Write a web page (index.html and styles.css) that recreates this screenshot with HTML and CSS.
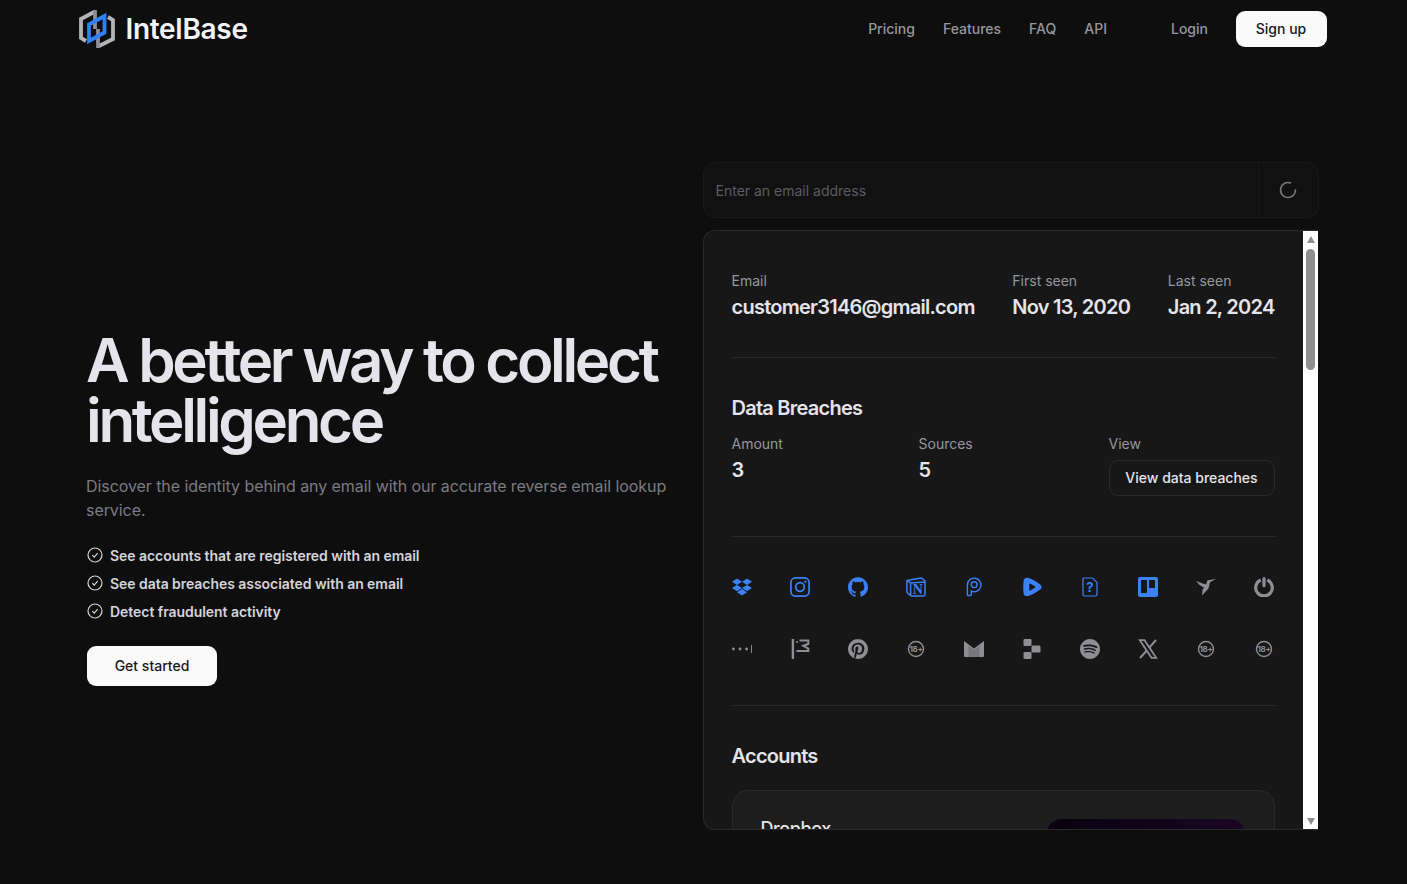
FILE: index.html
```html
<!DOCTYPE html>
<html lang="en">
<head>
  <meta charset="UTF-8">
  <meta name="viewport" content="width=device-width, initial-scale=1.0">
  <title>IntelBase</title>
  <link rel="stylesheet" href="styles.css">
</head>
<body>

  <header class="navbar">
    <a class="brand" href="#">
      <svg class="brand-mark" viewBox="0 0 36 40" fill="none" stroke-width="3.800">
        <path d="M16 2.500 2 10v19l5 3" stroke="#b4b4b8"/>
        <path d="M16 1v19" stroke="#8d8d91"/>
        <path d="M19 37.500 34 30V11l-5-3" stroke="#b4b4b8"/>
        <path d="M19 39V20" stroke="#8d8d91"/>
        <path d="M10 15.500 25.500 7v16.500L10 32z" stroke="#2f80f7"/>
      </svg>
      <span>IntelBase</span>
    </a>
    <nav class="nav-links">
      <a href="#">Pricing</a>
      <a href="#">Features</a>
      <a href="#">FAQ</a>
      <a href="#">API</a>
    </nav>
    <a class="nav-login" href="#">Login</a>
    <a class="btn btn-signup" href="#">Sign up</a>
  </header>

  <main class="hero">
    <section class="hero-left">
      <h1>A better way to collect intelligence</h1>
      <p class="lead">Discover the identity behind any email with our accurate reverse email lookup service.</p>
      <ul class="features">
        <li>
          <svg viewBox="0 0 16 16" fill="none" stroke="currentColor" stroke-width="1.200"><circle cx="8" cy="8" r="7"/><path d="m5.300 8.200 1.900 1.900 3.500-3.900"/></svg>
          See accounts that are registered with an email
        </li>
        <li>
          <svg viewBox="0 0 16 16" fill="none" stroke="currentColor" stroke-width="1.200"><circle cx="8" cy="8" r="7"/><path d="m5.300 8.200 1.900 1.900 3.500-3.900"/></svg>
          See data breaches associated with an email
        </li>
        <li>
          <svg viewBox="0 0 16 16" fill="none" stroke="currentColor" stroke-width="1.200"><circle cx="8" cy="8" r="7"/><path d="m5.300 8.200 1.900 1.900 3.500-3.900"/></svg>
          Detect fraudulent activity
        </li>
      </ul>
      <a class="btn btn-start" href="#">Get started</a>
    </section>

    <section class="hero-right">
      <div class="search">
        <input type="text" placeholder="Enter an email address">
        <div class="search-action">
          <svg viewBox="0 0 24 24" fill="none" stroke="#77777c" stroke-width="2" stroke-linecap="round"><path d="M21 12a9 9 0 1 1-6.219-8.560"/></svg>
        </div>
      </div>

      <div class="panel">
        <div class="panel-body">
          <div class="summary">
            <div class="field">
              <span class="label">Email</span>
              <strong class="value">customer3146@gmail.com</strong>
            </div>
            <div class="field">
              <span class="label">First seen</span>
              <strong class="value">Nov 13, 2020</strong>
            </div>
            <div class="field">
              <span class="label">Last seen</span>
              <strong class="value">Jan 2, 2024</strong>
            </div>
          </div>

          <div class="breaches">
            <h2>Data Breaches</h2>
            <div class="breach-row">
              <div class="field">
                <span class="label">Amount</span>
                <strong class="value">3</strong>
              </div>
              <div class="field">
                <span class="label">Sources</span>
                <strong class="value">5</strong>
              </div>
              <div class="field">
                <span class="label">View</span>
                <a class="btn-outline" href="#">View data breaches</a>
              </div>
            </div>
          </div>

          <div class="services">
            <!-- Found on these services -->
            <svg class="icon on" viewBox="0 0 24 24"><path d="M6 1.807L0 5.629l6 3.822 6.001-3.822L6 1.807zM18 1.807l-6 3.822 6 3.822 6-3.822-6-3.822zM0 13.274l6 3.822 6.001-3.822L6 9.452l-6 3.822zM18 9.452l-6 3.822 6 3.822 6-3.822-6-3.822zM6 18.371l6.001 3.822 6-3.822-6-3.822L6 18.371z"/></svg>
            <svg class="icon on" viewBox="0 0 20 20"><path class="line" stroke-width="1.700" d="M5.500.9h9a4.600 4.600 0 0 1 4.600 4.600v9a4.600 4.600 0 0 1-4.600 4.600h-9A4.600 4.600 0 0 1 .9 14.500v-9A4.600 4.600 0 0 1 5.500.9z"/><circle class="line" stroke-width="1.700" cx="10" cy="10" r="4.300"/><circle cx="15.300" cy="4.700" r="1.100"/></svg>
            <svg class="icon on" viewBox="0 0 24 24"><path d="M12 .297c-6.630 0-12 5.373-12 12 0 5.303 3.438 9.800 8.205 11.385.6.113.82-.258.82-.577 0-.285-.01-1.040-.015-2.040-3.338.724-4.042-1.610-4.042-1.610C4.422 18.070 3.633 17.700 3.633 17.700c-1.087-.744.084-.729.084-.729 1.205.084 1.838 1.236 1.838 1.236 1.070 1.835 2.809 1.305 3.495.998.108-.776.417-1.305.76-1.605-2.665-.3-5.466-1.332-5.466-5.930 0-1.310.465-2.380 1.235-3.220-.135-.303-.54-1.523.105-3.176 0 0 1.005-.322 3.300 1.230.96-.267 1.980-.399 3-.405 1.020.006 2.040.138 3 .405 2.280-1.552 3.285-1.230 3.285-1.230.645 1.653.24 2.873.12 3.176.765.84 1.230 1.910 1.230 3.220 0 4.610-2.805 5.625-5.475 5.920.42.36.81 1.096.81 2.220 0 1.606-.015 2.896-.015 3.286 0 .315.21.69.825.57C20.565 22.092 24 17.592 24 12.297c0-6.627-5.373-12-12-12"/></svg>
            <svg class="icon on" viewBox="0 0 20 20"><path class="line" stroke-width="1.500" d="M1 3.400 14.800.9c.6 0 1.100.2 1.500.6l2 1.900c.5.4.7.7.7 1.300v12.500c0 1-.5 1.700-1.700 1.800l-11.200.1c-.9 0-1.400-.2-1.900-.8L1.600 16c-.5-.7-.7-1.100-.7-1.800V4.400c0-.4 0-.7.1-1zM1.200 3.400 4.600 6l13.700-.9M4.600 6v12.800"/><text class="glyph-n" x="11.700" y="16.700">N</text></svg>
            <svg class="icon on" viewBox="0 0 20 20"><path class="line" stroke-width="1.400" d="M3.400 8a6.800 6.800 0 1 1 3.900 6.100v3.400a1 1 0 0 1-1 1H4.400a1 1 0 0 1-1-1z"/><circle class="line" stroke-width="1.400" cx="10.200" cy="7.700" r="2.900"/></svg>
            <svg class="icon on" viewBox="0 0 20 20"><path fill-rule="evenodd" d="M4 .9C7 .5 11.700 3 17.800 7.200c2.400 1.600 2.400 4 0 5.600-6.100 4.200-10.800 6.700-13.800 6.300-1.400-.2-2.200-1.300-2.400-2.800-.5-3.800-.5-8.800 0-12.600C1.800 2.200 2.600 1.100 4 .9zM7.300 7v6c0 .6.500.8 1 .5l4.500-2.800c.5-.3.500-1.100 0-1.400L8.300 6.500c-.5-.3-1 0-1 .5z"/></svg>
            <svg class="icon on" viewBox="0 0 20 20"><path class="line" stroke-width="1.200" d="M4 1h8.500L17 5.500v12c0 .9-.6 1.500-1.500 1.500h-11c-.9 0-1.500-.6-1.500-1.500v-15C3 1.600 3.300 1 4 1z"/><text class="glyph-q" x="10" y="15">?</text></svg>
            <svg class="icon on" viewBox="0 0 20 20"><path fill-rule="evenodd" d="M2 0h16a2 2 0 0 1 2 2v16a2 2 0 0 1-2 2H2a2 2 0 0 1-2-2V2a2 2 0 0 1 2-2zm1.700 3a.7.7 0 0 0-.7.7v11.600c0 .4.300.7.7.7h4.600a.7.7 0 0 0 .7-.7V3.700a.7.7 0 0 0-.7-.7zm8 0a.7.7 0 0 0-.7.7v6.600c0 .4.300.7.7.7h4.600a.7.7 0 0 0 .7-.7V3.700a.7.7 0 0 0-.7-.7z"/></svg>
            <svg class="icon" viewBox="0 0 20 20"><path d="M0 4 7.500 6.700 10 7.500 11.500 3.200 20 2 14 5.200 12.500 11.500 6 18.500 6.500 13 8 10.500 3.500 8z"/></svg>
            <svg class="icon" viewBox="0 0 20 20"><path class="line" stroke-width="3.200" d="M6.700 3a8.300 8.300 0 1 0 6.600 0"/><path class="line" stroke-width="3.200" stroke-linecap="round" d="M10 1.700v7"/></svg>

            <!-- Not found -->
            <svg class="icon" viewBox="0 0 20 20"><circle cx="1.400" cy="10" r="1.400"/><circle cx="8" cy="10" r="1.400"/><circle cx="14.600" cy="10" r="1.400"/><rect x="19" y="6" width=".9" height="8"/></svg>
            <svg class="icon" viewBox="0 0 20 20"><rect x="1.700" y="0" width="2.400" height="20"/><circle cx="7" cy="3" r="1"/><path class="line" stroke-width="2" d="M9.500 1.500h8.800V5l-5 1.800 5 2.700V12H6.500"/></svg>
            <svg class="icon" viewBox="0 0 24 24"><path d="M12.017 0C5.396 0 .029 5.367.029 11.987c0 5.079 3.158 9.417 7.618 11.162-.105-.949-.199-2.403.041-3.439.219-.937 1.406-5.957 1.406-5.957s-.359-.72-.359-1.781c0-1.663.967-2.911 2.168-2.911 1.024 0 1.518.769 1.518 1.688 0 1.029-.653 2.567-.992 3.992-.285 1.193.6 2.165 1.775 2.165 2.128 0 3.768-2.245 3.768-5.487 0-2.861-2.063-4.869-5.008-4.869-3.410 0-5.409 2.562-5.409 5.199 0 1.033.394 2.143.889 2.741.099.12.112.225.085.345-.09.375-.293 1.199-.334 1.363-.053.225-.172.271-.401.165-1.495-.69-2.433-2.878-2.433-4.646 0-3.776 2.748-7.252 7.920-7.252 4.158 0 7.392 2.967 7.392 6.923 0 4.135-2.607 7.462-6.233 7.462-1.214 0-2.354-.629-2.758-1.379l-.749 2.848c-.269 1.045-1.004 2.352-1.498 3.146 1.123.345 2.306.535 3.550.535 6.607 0 11.985-5.365 11.985-11.987C23.970 5.390 18.592.026 11.985.026L12.017 0z"/></svg>
            <svg class="icon" viewBox="0 0 20 20"><circle class="line" stroke-width="1.400" cx="10" cy="10" r="7.500"/><text class="glyph-age" x="10" y="12.800">18+</text></svg>
            <svg class="icon" viewBox="0 0 20 20"><path d="M0 2 10 9.500 20 2v15a1 1 0 0 1-1 1H1a1 1 0 0 1-1-1z"/><path d="M4.500 18V6.800L10 10.800l5.500-4V18z" fill="#77777b"/></svg>
            <svg class="icon" viewBox="0 0 20 20"><rect x="1.500" y="0" width="8" height="7" rx="1.200"/><rect x="9.500" y="6.500" width="9" height="7" rx="1.200"/><rect x="1.500" y="13" width="8" height="7" rx="1.200"/></svg>
            <svg class="icon" viewBox="0 0 24 24"><path d="M12 0C5.400 0 0 5.400 0 12s5.400 12 12 12 12-5.400 12-12S18.660 0 12 0zm5.521 17.340c-.24.359-.66.48-1.021.24-2.820-1.740-6.360-2.101-10.561-1.141-.418.122-.779-.179-.899-.539-.12-.421.18-.78.54-.9 4.560-1.021 8.520-.6 11.640 1.320.42.18.479.659.301 1.020zm1.440-3.300c-.301.42-.841.6-1.262.3-3.239-1.980-8.159-2.580-11.939-1.380-.479.12-1.020-.12-1.140-.6-.12-.48.12-1.021.6-1.141C9.600 9.900 15 10.561 18.720 12.840c.361.181.54.78.241 1.200zm.12-3.360C15.240 8.400 8.820 8.160 5.160 9.301c-.6.179-1.200-.181-1.380-.721-.18-.601.18-1.200.72-1.381 4.260-1.260 11.280-1.020 15.721 1.621.539.3.719 1.020.419 1.560-.299.421-1.020.599-1.559.3z"/></svg>
            <svg class="icon" viewBox="0 0 20 20"><path class="line" stroke-width="1.800" d="M1.800 1.200h4.700l11.700 17.600h-4.700z"/><path class="line" stroke-width="2" d="M18 1 11.300 8.600M8.800 11.500 2 19"/></svg>
            <svg class="icon" viewBox="0 0 20 20"><circle class="line" stroke-width="1.400" cx="10" cy="10" r="7.500"/><text class="glyph-age" x="10" y="12.800">18+</text></svg>
            <svg class="icon" viewBox="0 0 20 20"><circle class="line" stroke-width="1.400" cx="10" cy="10" r="7.500"/><text class="glyph-age" x="10" y="12.800">18+</text></svg>
          </div>

          <div class="accounts">
            <h2>Accounts</h2>
            <div class="account-card">
              <h3>Dropbox</h3>
              <div class="account-preview"></div>
            </div>
          </div>
        </div>

        <!-- Scrollbar of the results list -->
        <div class="scrollbar">
          <span class="scroll-up"></span>
          <span class="scroll-thumb"></span>
          <span class="scroll-down"></span>
        </div>
      </div>
    </section>
  </main>

</body>
</html>
```

FILE: styles.css
```css
* {
  margin: 0;
  padding: 0;
  box-sizing: border-box;
}

body {
  font-family: 'Inter', 'Liberation Sans', sans-serif;
  background-color: #0e0e0f;
  color: #e4e4ea;
  height: 884px;
  overflow: hidden;
}

a {
  text-decoration: none;
  color: inherit;
}

.navbar {
  display: flex;
  align-items: center;
  height: 58px;
  width: 1250px;
  margin: 0 auto;
}

.brand {
  display: flex;
  align-items: center;
  gap: 11px;
  margin-right: auto;
  font-size: 28px;
  font-weight: 600;
  color: #f4f4f6;
  letter-spacing: -0.3px;
}

.brand-mark {
  width: 36px;
  height: 40px;
}

.nav-links {
  display: flex;
  gap: 28px;
  margin-right: 64px;
  padding-bottom: 1px;
}

.nav-links a,
.nav-login {
  font-size: 14px;
  font-weight: 500;
  color: #96969d;
}

.nav-login {
  margin-right: 27.5px;
  padding-bottom: 1px;
}

.btn {
  display: flex;
  align-items: center;
  justify-content: center;
  padding-bottom: 1px;
  background-color: #fafafa;
  color: #18181b;
  font-size: 14px;
  font-weight: 500;
}

.btn-signup {
  width: 91px;
  height: 36px;
  border-radius: 9px;
  margin-right: 2px;
}

.hero {
  display: flex;
  margin: 104px 0 0 86px;
}

.hero-left {
  width: 616.5px;
  padding-top: 168px;
}

h1 {
  font-size: 60px;
  line-height: 60px;
  font-weight: 600;
  letter-spacing: -3.32px;
  color: #e4e4ea;
}

.lead {
  margin-top: 24px;
  font-size: 16px;
  line-height: 24px;
  letter-spacing: -0.07px;
  color: #7b7b82;
}

.features {
  list-style: none;
  margin-top: 19px;
}

.features li {
  display: flex;
  align-items: center;
  gap: 7px;
  height: 28px;
  font-size: 14px;
  font-weight: 600;
  letter-spacing: -0.05px;
  color: #d4d4da;
}

.features svg {
  width: 16px;
  height: 16px;
  margin-left: 1px;
}

.btn-start {
  width: 130px;
  height: 40px;
  border-radius: 9px;
  margin: 21px 0 0 1px;
}

.hero-right {
  width: 615.5px;
}

.search {
  display: flex;
  width: 616px;
  height: 56px;
  border: 1px solid #1a1a1b;
  border-radius: 12px;
  background-color: #111112;
}

.search input {
  flex: 1;
  min-width: 0;
  padding-left: 12px;
  background: none;
  border: none;
  outline: none;
  font-family: inherit;
  font-size: 14px;
}

.search input::placeholder {
  color: #5c5c62;
}

.search-action {
  display: flex;
  align-items: center;
  justify-content: center;
  width: 60px;
  border-left: 1px solid #1a1a1b;
}

.search-action svg {
  width: 20px;
  height: 20px;
}

.panel {
  display: flex;
  height: 600px;
  margin-top: 12px;
  border: 1px solid #2a2a2c;
  border-right: none;
  border-radius: 12px 0 0 12px;
  background-color: #171718;
  overflow: hidden;
}

.panel-body {
  flex: 1;
  min-width: 0;
  padding: 0 28.5px 0 28px;
  overflow: hidden;
}

.scrollbar {
  display: flex;
  flex-direction: column;
  align-items: center;
  flex-shrink: 0;
  width: 15px;
  background-color: #fff;
}

.scroll-up,
.scroll-down {
  width: 0;
  height: 0;
  border-left: 4.5px solid transparent;
  border-right: 4.5px solid transparent;
}

.scroll-up {
  margin-top: 5px;
  border-bottom: 7px solid #8f8f8f;
}

.scroll-down {
  margin: auto 0 4px;
  border-top: 7px solid #8f8f8f;
}

.scroll-thumb {
  width: 9px;
  height: 121px;
  margin-top: 6px;
  border-radius: 5px;
  background-color: #8f8f8f;
}

.field {
  display: flex;
  flex-direction: column;
}

.label {
  font-size: 14px;
  line-height: 20px;
  color: #96969d;
}

.value {
  margin-top: 2px;
  font-size: 20px;
  line-height: 28px;
  font-weight: 600;
  letter-spacing: -0.75px;
  color: #e4e4ea;
}

.summary {
  display: flex;
  justify-content: space-between;
  padding: 40px 0 36px;
  border-bottom: 1px solid #2a2a2c;
}

.breaches {
  padding: 36px 0 40px;
  border-bottom: 1px solid #2a2a2c;
}

h2 {
  font-size: 20px;
  line-height: 28px;
  font-weight: 600;
  letter-spacing: -0.75px;
  color: #e4e4ea;
}

.breach-row {
  display: grid;
  grid-template-columns: 187px 190px 1fr;
  margin-top: 12px;
}

.btn-outline {
  display: flex;
  align-items: center;
  justify-content: center;
  width: 166px;
  height: 36px;
  margin-top: 6px;
  padding-bottom: 2px;
  border: 1px solid #2a2a2c;
  border-radius: 9px;
  font-size: 14px;
  font-weight: 500;
  color: #e4e4ea;
}

.services {
  display: grid;
  grid-template-columns: repeat(10, 20px);
  justify-content: space-between;
  row-gap: 42px;
  padding: 40px 0 46px;
  border-bottom: 1px solid #2a2a2c;
}

.icon {
  display: block;
  width: 20px;
  height: 20px;
  fill: #8e8e93;
  color: #8e8e93;
}

.icon.on {
  fill: #3b82f6;
  color: #3b82f6;
}

.icon .line {
  fill: none;
  stroke: currentColor;
}

.glyph-age {
  font-size: 8px;
  font-weight: 700;
  letter-spacing: -0.3px;
  text-anchor: middle;
}

.glyph-n {
  font-family: 'Liberation Serif', serif;
  font-size: 14px;
  font-weight: 700;
  text-anchor: middle;
}

.glyph-q {
  font-size: 13px;
  font-weight: 700;
  text-anchor: middle;
}

.accounts {
  padding: 36px 0 40px;
}

.account-card {
  display: flex;
  justify-content: space-between;
  height: 256px;
  margin-top: 20px;
  padding: 28px;
  border: 1px solid #2a2a2c;
  border-radius: 16px;
  background-color: #1d1d1e;
}

.account-card h3 {
  font-size: 18px;
  line-height: 16px;
  padding-top: 2px;
  font-weight: 500;
  letter-spacing: -0.4px;
  color: #e4e4ea;
}

.account-preview {
  width: 200px;
  height: 200px;
  border-radius: 16px;
  background: linear-gradient(90deg, #09020f, #1a0626);
}
```
